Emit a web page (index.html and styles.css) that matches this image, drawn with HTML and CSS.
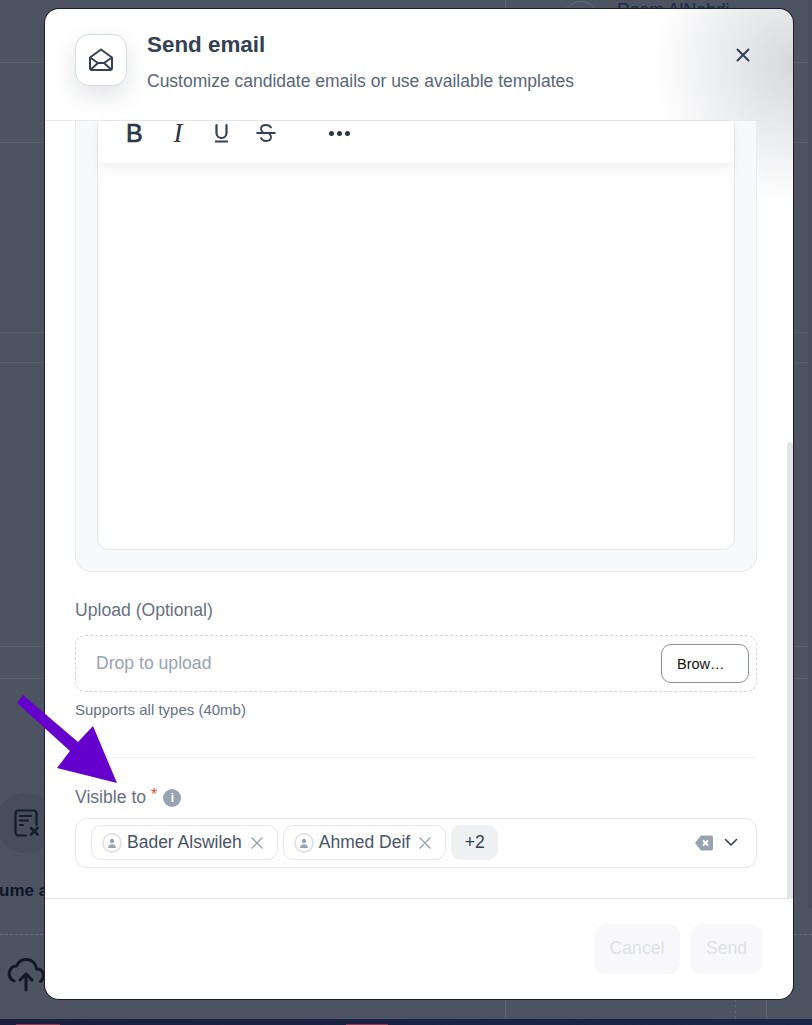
FILE: index.html
```html
<!DOCTYPE html>
<html lang="en">
  <head>
    <meta charset="UTF-8" />
    <meta name="viewport" content="width=device-width, initial-scale=1.0" />
    <title>Send email</title>
    <link rel="stylesheet" href="styles.css">
  </head>
  <body>
    <div class="page">
      <!-- dimmed page behind the dialog -->
      <div class="behind">
        <div class="behindRow rowA">
          <span class="behindAvatar"></span>
          <span class="behindName">Reem AlNahdi</span>
        </div>
        <div class="behindRow rowB"></div>
        <div class="behindRow rowC"></div>
        <div class="behindRow rowD"></div>
        <div class="behindRow rowE"></div>
        <div class="behindRow rowF"></div>
        <div class="behindBottom">
          <div class="roundIcon">
            <svg width="28" height="28" viewBox="0 0 28 28" fill="none" stroke="#141c30" stroke-width="2.200" stroke-linecap="round" stroke-linejoin="round">
              <path d="M14 26.500H6.500a3 3 0 0 1-3-3V4.500a3 3 0 0 1 3-3h15a3 3 0 0 1 3 3V16" />
              <path d="M8 7h11M8 11.500h8M8 16h3" />
              <path d="M19 19l6.500 6.500M25.500 19L19 25.500" stroke-width="2.600" />
            </svg>
          </div>
          <div class="behindText">ume a</div>
          <div class="dashLine"></div>
          <svg class="cloudIcon" width="38" height="36" viewBox="0 0 38 36" fill="none" stroke="#111827" stroke-width="3" stroke-linecap="round" stroke-linejoin="round">
            <path d="M7 24C3 22 1.500 18.500 2.500 14.500 3.500 11 6.500 9 9.500 9 11.500 4.500 15.500 2 20 2.500c5.500.5 9 4.500 9.500 9.500 4-.5 7 2.500 7 6.500 0 2.500-1 4.500-3 6" />
            <path d="M19 33V17M13 23l6-6 6 6" />
          </svg>
          <div class="behindSmall">Click to upload</div>
        </div>
        <div class="behindLine lineA"></div>
        <div class="behindLine lineB"></div>
        <div class="behindLine lineC"></div>
        <div class="pageScroll"></div>
      </div>
      <div class="taskbar">
        <span class="taskMark markA"></span>
        <span class="taskMark markB"></span>
      </div>

      <div class="modal">
        <header class="modalHead">
          <div class="headIcon">
            <svg width="26" height="26" viewBox="0 0 26 26" fill="none" stroke="#344054" stroke-width="2" stroke-linecap="round" stroke-linejoin="round">
              <path d="M2 10.500 13 2.500l11 8v10.500a2 2 0 0 1-2 2H4a2 2 0 0 1-2-2z" />
              <path d="M2.500 10.800 10 16h6l7.500-5.200" />
              <path d="M3 22.300 10 16M23 22.300 16 16" />
            </svg>
          </div>
          <div class="headText">
            <h1>Send email</h1>
            <p>Customize candidate emails or use available templates</p>
          </div>
          <button class="closeBtn" aria-label="Close">
            <svg width="14" height="14" viewBox="0 0 14 14" fill="none" stroke="#344054" stroke-width="2" stroke-linecap="round">
              <path d="M1.500 1.500l11 11M12.500 1.500l-11 11" />
            </svg>
          </button>
        </header>

        <div class="modalBody">
          <div class="scrollThumb"></div>
          <div class="editorCard">
            <div class="editor">
              <div class="toolbar">
                <span class="tool toolB">B</span>
                <span class="tool toolI">I</span>
                <svg class="toolU" width="15" height="20" viewBox="0 0 15 20" fill="none" stroke="#344054" stroke-width="2.200" stroke-linecap="round">
                  <path d="M2.500 2v8a5 5 0 0 0 10 0V2" />
                  <path d="M1 18.500h13" stroke-linecap="butt" />
                </svg>
                <svg class="toolS" width="20" height="20" viewBox="0 0 20 20" fill="none" stroke="#344054" stroke-width="1.800" stroke-linecap="round">
                  <path d="M15 4.500C14 2.800 12 2 10 2 7 2 5 3.500 5 5.800c0 1.200.5 2.200 1.500 3" />
                  <path d="M5 15c1 2 3 3 5 3 3 0 5-1.500 5-4 0-1.200-.5-2.200-1.500-3" />
                  <path d="M0.500 10h19" stroke-linecap="butt" />
                </svg>
                <span class="dots"><i></i><i></i><i></i></span>
              </div>
            </div>
          </div>

          <div class="field uploadField">
            <label class="fieldLabel">Upload (Optional)</label>
            <div class="dropZone">
              <span class="dropText">Drop to upload</span>
              <button class="browseBtn">Brow…</button>
            </div>
            <div class="hint">Supports all types (40mb)</div>
          </div>

          <hr class="divider" />

          <div class="field">
            <label class="fieldLabel visibleLabel">
              Visible to <span class="req">*</span>
              <span class="infoDot">i</span>
            </label>
            <div class="tagSelect">
              <div class="tag">
                <span class="avatar">
                  <svg width="10" height="10" viewBox="0 0 10 10" fill="#98a2b3"><circle cx="5" cy="3" r="2.200" /><path d="M1 10c0-2.500 1.800-3.800 4-3.800s4 1.300 4 3.800z" /></svg>
                </span>
                <span class="tagName">Bader Alswileh</span>
                <svg class="tagX" width="12" height="12" viewBox="0 0 12 12" fill="none" stroke="#98a2b3" stroke-width="1.400"><path d="M.5.500l11 11M11.500.500l-11 11" /></svg>
              </div>
              <div class="tag">
                <span class="avatar">
                  <svg width="10" height="10" viewBox="0 0 10 10" fill="#98a2b3"><circle cx="5" cy="3" r="2.200" /><path d="M1 10c0-2.500 1.800-3.800 4-3.800s4 1.300 4 3.800z" /></svg>
                </span>
                <span class="tagName">Ahmed Deif</span>
                <svg class="tagX" width="12" height="12" viewBox="0 0 12 12" fill="none" stroke="#98a2b3" stroke-width="1.400"><path d="M.5.500l11 11M11.500.500l-11 11" /></svg>
              </div>
              <div class="moreTag">+2</div>
              <div class="selectIcons">
                <svg width="18" height="16" viewBox="0 0 18 16" fill="#98a2b3">
                  <path d="M6 .500h10a2 2 0 0 1 2 2v11a2 2 0 0 1-2 2H6L0 8z" />
                  <path d="M8 5.500l5 5M13 5.500l-5 5" stroke="#fff" stroke-width="2" fill="none" />
                </svg>
                <svg width="14" height="9" viewBox="0 0 14 9" fill="none" stroke="#344054" stroke-width="1.600" stroke-linecap="round" stroke-linejoin="round">
                  <path d="M1.500 1.500 7 7l5.500-5.500" />
                </svg>
              </div>
            </div>
          </div>
        </div>

        <footer class="modalFoot">
          <button class="footBtn cancelBtn">Cancel</button>
          <button class="footBtn sendBtn">Send</button>
        </footer>
      </div>

      <!-- annotation arrow drawn on the screenshot -->
      <svg class="arrow" width="120" height="95" viewBox="0 0 120 95" fill="#6600cc">
        <path d="M17 13 23 5 78 52 93 36 117 93 57 78 70 61z" />
      </svg>
    </div>
  </body>
</html>
```

FILE: styles.css
```css
* {
  box-sizing: border-box;
}
html,
body {
  margin: 0;
  padding: 0;
  font-family: 'Liberation Sans', Arial, sans-serif;
}
.page {
  position: relative;
  width: 812px;
  height: 1025px;
  overflow: hidden;
  background-color: #4d5360;
}

/* page behind */
.behind {
  position: relative;
  height: 1019px;
  overflow: hidden;
}
.behindRow {
  border-bottom: 1px solid #5a606c;
}
.rowA {
  height: 63px;
  position: relative;
}
.behindName {
  position: absolute;
  left: 617px;
  top: 0;
  font-size: 17.6px;
  line-height: 20px;
  white-space: nowrap;
  color: #1f2a44;
}
.behindAvatar {
  position: absolute;
  left: 563px;
  top: 1px;
  width: 36px;
  height: 36px;
  border: 1px solid #666c77;
  border-radius: 50%;
}
.rowB {
  height: 80px;
}
.rowC {
  height: 190px;
}
.rowD {
  height: 30px;
}
.rowE {
  height: 284px;
}
.rowF {
  height: 32px;
}
.behindBottom {
  padding-top: 114px;
}
.roundIcon {
  width: 60px;
  height: 60px;
  margin-left: -4px;
  border-radius: 50%;
  background-color: #474d5a;
  display: flex;
  align-items: center;
  justify-content: center;
}
.behindText {
  margin-top: 28px;
  margin-left: -1px;
  font-size: 17px;
  font-weight: bold;
  color: #0f172a;
}
.dashLine {
  margin-top: 33px;
  border-top: 1px dashed #666c77;
}
.cloudIcon {
  display: block;
  margin: 22px 0 0 7px;
}
.behindSmall {
  margin: 23px 0 0 42px;
  font-size: 15px;
  color: #111827;
}
.behindLine {
  position: absolute;
  top: 999px;
  bottom: 0;
  border-left: 1px solid #5f6470;
}
.lineA {
  top: 0;
  left: 505px;
}
.lineB {
  left: 735px;
  border-left-style: dashed;
}
.lineC {
  left: 766px;
}
.pageScroll {
  position: absolute;
  top: 0;
  right: 0;
  width: 4px;
  height: 908px;
  background-color: #474d5a;
}
.taskbar {
  position: relative;
  height: 6px;
  background-image: linear-gradient(90deg, #1b1f3d, #17264b);
}
.taskMark {
  position: absolute;
  bottom: 0;
  height: 1px;
  background-color: #8a3a4f;
}
.markA {
  left: 16px;
  width: 44px;
}
.markB {
  left: 346px;
  width: 42px;
}

/* dialog */
.modal {
  position: absolute;
  left: 45px;
  top: 9px;
  width: 748px;
  height: 990px;
  display: flex;
  flex-direction: column;
  border-radius: 14px;
  overflow: hidden;
  background-color: #fff;
  background-image: radial-gradient(circle 140px at 100% 56px, #d6d8dc, rgba(214, 216, 220, 0) 100%);
  box-shadow: 0 0 0 1px #1b1f2a;
}
.modalHead {
  height: 112px;
  flex-shrink: 0;
  display: flex;
  align-items: flex-start;
  padding: 25px 30px 0;
  border-bottom: 1px solid #e4e7ec;
}
.headIcon {
  width: 52px;
  height: 52px;
  flex-shrink: 0;
  display: flex;
  align-items: center;
  justify-content: center;
  background-color: #fff;
  border: 1px solid #d5dbe5;
  border-radius: 14px;
  box-shadow: 0 10px 24px rgba(16, 24, 40, 0.12);
}
.headText {
  flex: 1;
  margin-left: 20px;
}
.headText h1 {
  margin: -2px 0 0;
  font-size: 22.4px;
  line-height: 25px;
  font-weight: bold;
  color: #344054;
}
.headText p {
  margin: 12px 0 0;
  font-size: 17.5px;
  line-height: 24px;
  color: #596579;
}
.closeBtn {
  padding: 0;
  margin: 14px 13px 0 0;
  border: none;
  background: none;
  display: flex;
}

.modalBody {
  position: relative;
  height: 777px;
  flex-shrink: 0;
  padding: 0 36px 0 30px;
}
.scrollThumb {
  position: absolute;
  right: 0;
  bottom: 0;
  width: 6px;
  height: 456px;
  border-radius: 3px 3px 0 0;
  background-color: #e2e4e8;
}
.editorCard {
  height: 451px;
  padding: 0 21px 21px;
  background-color: #f8f9fb;
  border: 1px solid #e9ebf0;
  border-top: none;
  border-radius: 0 0 16px 16px;
}
.editor {
  height: 100%;
  background-color: #fff;
  border: 1px solid #e4e7ec;
  border-top: none;
  border-radius: 0 0 12px 12px;
}
.toolbar {
  height: 42px;
  display: flex;
  align-items: center;
  padding: 0 0 18px 28px;
  background-color: #fff;
  box-shadow: 0 6px 14px rgba(16, 24, 40, 0.06);
}
.tool {
  width: 16px;
  text-align: center;
  color: #2a3649;
}
.toolB {
  font-size: 25px;
  line-height: 24px;
  -webkit-text-stroke: 0.7px #2a3649;
}
.toolI {
  margin-left: 28px;
  font-family: 'Liberation Serif', serif;
  font-size: 27px;
  line-height: 24px;
  font-style: italic;
}
.toolU {
  margin-left: 28px;
}
.toolS {
  margin-left: 27px;
}
.dots {
  display: flex;
  gap: 3px;
  margin-left: 53px;
}
.dots i {
  width: 5px;
  height: 5px;
  border-radius: 50%;
  background-color: #2a3649;
}

.field {
  display: block;
}
.uploadField {
  margin-top: 28px;
}
.fieldLabel {
  display: block;
  font-size: 17.6px;
  line-height: 20px;
  color: #667085;
}
.dropZone {
  height: 57px;
  margin-top: 15px;
  display: flex;
  align-items: center;
  justify-content: space-between;
  padding: 0 7px 0 20px;
  border: 1px dashed #d0d5dd;
  border-radius: 10px;
}
.dropText {
  font-size: 17.6px;
  color: #98a2b3;
}
.browseBtn {
  width: 88px;
  height: 39px;
  padding: 0 0 0 15px;
  text-align: left;
  font-family: inherit;
  font-size: 14.5px;
  color: #111;
  background-color: #fff;
  border: 1px solid #8b8f99;
  border-radius: 10px;
}
.hint {
  margin-top: 10px;
  font-size: 15px;
  line-height: 16px;
  color: #667085;
}
.divider {
  margin: 39px 0 0;
  border: none;
  border-top: 1px solid #eef0f3;
}
.visibleLabel {
  display: flex;
  align-items: center;
  margin-top: 29px;
}
.req {
  align-self: flex-start;
  margin-left: 5px;
  color: #f04438;
  font-size: 16px;
  line-height: 16px;
}
.infoDot {
  width: 18px;
  height: 18px;
  margin: 2px 0 0 6px;
  border-radius: 50%;
  background-color: #98a2b3;
  color: #fff;
  font-size: 12px;
  font-weight: bold;
  line-height: 18px;
  text-align: center;
}
.tagSelect {
  height: 50px;
  margin-top: 11px;
  display: flex;
  align-items: flex-start;
  gap: 5px;
  padding: 6px 18px 0 15px;
  border: 1px solid #e4e7ec;
  border-radius: 12px;
}
.tag {
  height: 35px;
  display: flex;
  align-items: center;
  padding: 0 14px 0 10px;
  background-color: #fff;
  border: 1px solid #e4e7ec;
  border-radius: 10px;
}
.avatar {
  width: 20px;
  height: 20px;
  display: flex;
  align-items: center;
  justify-content: center;
  border: 2px solid #dfe3ea;
  border-radius: 50%;
}
.tagName {
  margin-left: 5px;
  font-size: 17.5px;
  color: #475467;
}
.tagX {
  margin-left: 9px;
}
.moreTag {
  width: 47px;
  height: 35px;
  display: flex;
  align-items: center;
  justify-content: center;
  font-size: 17.5px;
  color: #344054;
  background-color: #eef0f4;
  border-radius: 10px;
}
.selectIcons {
  height: 35px;
  margin-left: auto;
  display: flex;
  align-items: center;
  gap: 11px;
}

.modalFoot {
  flex: 1;
  display: flex;
  justify-content: flex-end;
  align-items: flex-start;
  gap: 10px;
  padding: 25px 30px 0 0;
  border-top: 1px solid #e4e7ec;
}
.footBtn {
  height: 50px;
  padding: 0 0 2px;
  font-family: inherit;
  font-size: 17.6px;
  color: #dfe0e8;
  background-color: #f8f8fb;
  border: none;
  border-radius: 12px;
}
.cancelBtn {
  width: 86px;
}
.sendBtn {
  width: 73px;
}

/* arrow on top of the screenshot */
.arrow {
  position: absolute;
  left: 0;
  top: 690px;
}
```
